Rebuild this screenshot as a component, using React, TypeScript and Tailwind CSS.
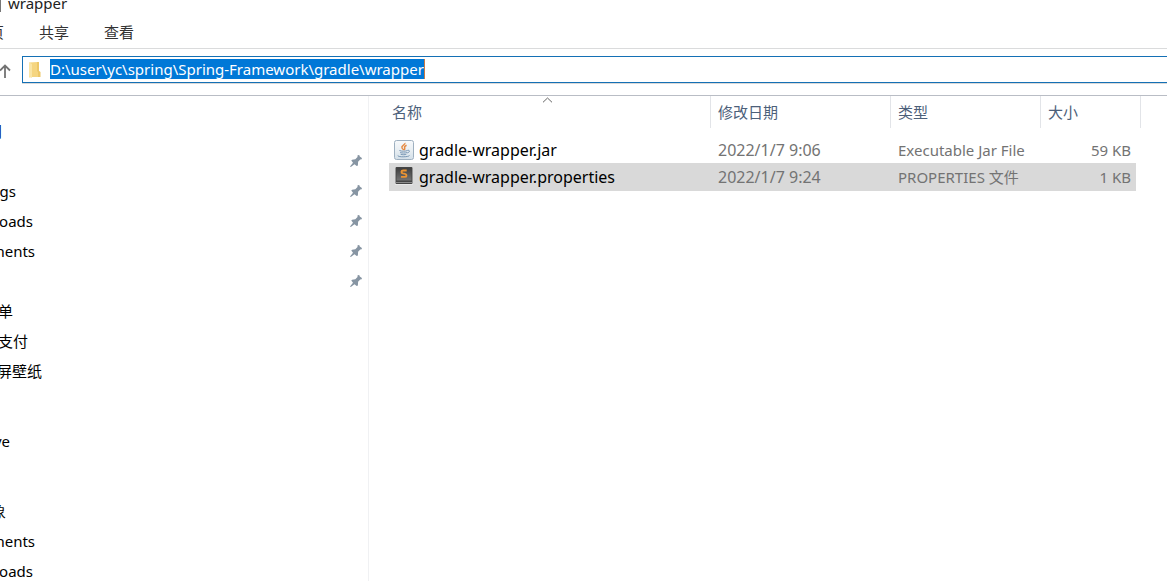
import React from "react";

type NavItem = { label: string; box: string; pinned?: boolean };

const quickAccess: NavItem[] = [
  { label: "", box: "w-0", pinned: true },
  { label: "gs", box: "w-4", pinned: true },
  { label: "oads", box: "w-[33px]", pinned: true },
  { label: "ments", box: "w-[35px]", pinned: true },
  { label: "", box: "w-0", pinned: true },
  { label: "单", box: "w-[13px]" },
  { label: "支付", box: "w-7" },
  { label: "屏壁纸", box: "w-[42px]" },
];

const cloud: NavItem[] = [{ label: "ve", box: "w-[10px]" }];

const computer: NavItem[] = [
  { label: "象", box: "w-[6px]" },
  { label: "ments", box: "w-[35px]" },
  { label: "oads", box: "w-[33px]" },
];

const files = [
  { name: "gradle-wrapper.jar", date: "2022/1/7 9:06", type: "Executable Jar File", size: "59 KB", icon: JarIcon, selected: false },
  { name: "gradle-wrapper.properties", date: "2022/1/7 9:24", type: "PROPERTIES 文件", size: "1 KB", icon: SublimeIcon, selected: true },
];

function PinIcon() {
  return (
    <svg className="h-[14px] w-[14px]" viewBox="0 0 14 14" aria-hidden="true">
      <path d="M8.6 1.2 10.2 1.1 10.8 2.5 12.9 4 12.7 5.2 11.2 5.5 9.1 7.7 8.9 11.4 7.7 12 5.5 10.3 1.8 12.9 1 12.6 4 8.8 2.3 6.6 3.1 5.7 6.3 5.2 8.5 3Z" fill="#8795a3" />
    </svg>
  );
}

function JarIcon() {
  return (
    <svg className="h-5 w-5" viewBox="0 0 20 20" aria-hidden="true">
      <defs>
        <linearGradient id="jar" x1="0" y1="0" x2="0" y2="1">
          <stop offset="0" stopColor="#f7f9fb" />
          <stop offset=".5" stopColor="#e9eff3" />
          <stop offset="1" stopColor="#d3dfe8" />
        </linearGradient>
      </defs>
      <rect x=".5" y=".5" width="19" height="19" rx="2" fill="url(#jar)" stroke="#9eb0c0" />
      <path d="M10.8 3C12 5 4.4 5.9 9.8 10M12.6 5.3C8.5 7 12 7.5 10.3 10" fill="none" stroke="#e58a43" strokeWidth="1.5" />
      <path d="M5.4 10.5c2 .9 6.4.9 8.2 0M6.2 12.5c2 .7 5 .7 6.7 0M6.6 14.2c2 .7 4.4.7 5.8 0M13.7 10.3c2.8-.4 1.9 2.3-.5 2.6M4 15.4c-1.3 1.9 10.7 1.8 11.5.1" fill="none" stroke="#7896b4" />
    </svg>
  );
}

function SublimeIcon() {
  return (
    <svg className="h-5 w-5" viewBox="0 0 20 20" aria-hidden="true">
      <defs>
        <linearGradient id="tile" x1="0" y1="0" x2="0" y2="1">
          <stop offset="0" stopColor="#3f3f3f" />
          <stop offset="1" stopColor="#737373" />
        </linearGradient>
      </defs>
      <rect x="1" y="0" width="18" height="18" rx="1" fill="#e8e8e8" />
      <rect x="1.5" y="0" width="17" height="17" rx="1" fill="#454545" />
      <rect x="2.5" y="1" width="15" height="12.5" fill="url(#tile)" />
      <path d="M2 15.5h16" stroke="#8b8b8b" />
      <path d="M12.7 3.5H9.2C7 3.5 6.9 5.9 8.8 6.4L11 6.9C13.1 7.4 12.9 9.9 10.8 9.9H7" fill="none" stroke="#eb9432" strokeWidth="1.9" />
    </svg>
  );
}

function FolderIcon() {
  return (
    <svg className="h-[18px] w-[14px]" viewBox="0 0 14 18" aria-hidden="true">
      <path d="M1 1.5 9.5 1V9l2.5 2v5H4L1 16.5Z" fill="#f5d580" />
      <path d="M1 1.5 4 3v14L1 15.5Z" fill="#fae5a6" />
      <path d="M9 1v9l1 1v5h2.5v-5L11 10V1Z" fill="#edc768" />
    </svg>
  );
}

function NavGroup({ items }: { items: NavItem[] }) {
  return (
    <ul>
      {items.map((item, i) => (
        <li key={i} className="flex h-[30px] items-center justify-between pr-[5px]">
          <span className={`flex justify-end overflow-hidden whitespace-nowrap ${item.box}`}>
            <span className="shrink-0">{item.label}</span>
          </span>
          {item.pinned && <PinIcon />}
        </li>
      ))}
    </ul>
  );
}

export default function App() {
  return (
    <div className="flex h-screen flex-col overflow-hidden bg-white font-['Noto_Sans','Noto_Sans_CJK_SC',sans-serif] text-[15px] leading-5 text-black">
      <header className="shrink-0">
        <div className="flex h-4 items-end gap-[7px] overflow-hidden">
          <span className="mb-1 h-4 w-px bg-[#777]" />
          <h1 className="mb-[3px] text-[#222]">wrapper</h1>
        </div>
        <nav className="flex h-[33px] items-center border-b border-[#dadbdc] text-[#333]">
          <button className="flex w-1 justify-end overflow-hidden"><span className="shrink-0">页</span></button>
          <button className="ml-[35px]">共享</button>
          <button className="ml-[35px]">查看</button>
        </nav>
        <div className="flex h-[47px] items-start border-b border-[#b9bdc5] pt-[7px]">
          <button aria-label="Up" className="flex h-[27px] w-[22px] items-center justify-start pt-[3px]">
            <svg className="h-4 w-3" viewBox="0 0 12 16" aria-hidden="true">
              <path d="M5 15V2.5M0 7.5l5-5 5 5" fill="none" stroke="#737373" strokeWidth="1.8" />
            </svg>
          </button>
          <div className="min-w-0 flex-1 border-b border-[#d9d9d9]">
            <div className="flex h-[27px] items-start border-y border-l border-[#1470b5] pt-[2px] pl-[5px]">
              <div className="pt-[2px]"><FolderIcon /></div>
              <input
                aria-label="Address"
                className="ml-2 h-5 border-r border-[#c87a45] bg-[#0078d7] text-white outline-none field-sizing-content"
                defaultValue={"D:\\user\\yc\\spring\\Spring-Framework\\gradle\\wrapper"}
              />
            </div>
          </div>
        </div>
      </header>
      <div className="flex min-h-0 flex-1">
        <aside className="w-[369px] shrink-0 overflow-hidden border-r border-[#f0f1f3] pt-5">
          <div className="flex h-[30px] items-center">
            <h2 className="flex w-[2px] justify-end overflow-hidden text-[#000040]"><span className="shrink-0">问</span></h2>
          </div>
          <div className="flex flex-col gap-10">
            <NavGroup items={quickAccess} />
            <NavGroup items={cloud} />
            <NavGroup items={computer} />
          </div>
        </aside>
        <main className="min-w-0 flex-1 pl-5">
          <table className="w-[752px] table-fixed border-collapse text-left">
            <colgroup>
              <col className="w-[322px]" />
              <col className="w-[180px]" />
              <col className="w-[150px]" />
              <col className="w-[95px]" />
              <col className="w-[5px]" />
            </colgroup>
            <thead className="text-[#4c607a]">
              <tr>
                <th className="relative h-10 p-0 align-top font-normal">
                  <svg className="absolute top-px left-[153px] h-[6px] w-[11px]" viewBox="0 0 11 6" aria-hidden="true">
                    <path d="M1 5.3 5.5 1 10 5.3" fill="none" stroke="#666" />
                  </svg>
                  <div className="flex h-8 items-center border-r border-[#e2e4e8] pl-[3px]">名称</div>
                </th>
                <th className="p-0 align-top font-normal"><div className="flex h-8 items-center border-r border-[#e2e4e8] pl-[7px]">修改日期</div></th>
                <th className="p-0 align-top font-normal"><div className="flex h-8 items-center border-r border-[#e2e4e8] pl-[7px]">类型</div></th>
                <th className="p-0 align-top font-normal"><div className="flex h-8 items-center pl-[7px]">大小</div></th>
                <td className="p-0 align-top"><div className="h-8 border-r border-[#e2e4e8]" /></td>
              </tr>
            </thead>
            <tbody className="text-[#737373]">
              {files.map(({ icon: Icon, ...file }) => {
                const cell = file.selected ? "h-7 p-0 bg-[#d9d9d9]" : "h-[27px] p-0";
                return (
                  <tr key={file.name}>
                    <td className={cell}>
                      <div className="flex items-center gap-[5px] pl-[5px] text-base leading-5 text-black">
                        <Icon />
                        <span className="whitespace-nowrap">{file.name}</span>
                      </div>
                    </td>
                    <td className={cell}><div className="pl-[7px] text-base leading-5">{file.date}</div></td>
                    <td className={cell}><div className="pl-[7px] whitespace-nowrap">{file.type}</div></td>
                    <td className={cell}><div className="pr-[5px] text-right">{file.size}</div></td>
                    <td className="p-0" />
                  </tr>
                );
              })}
            </tbody>
          </table>
        </main>
      </div>
    </div>
  );
}
